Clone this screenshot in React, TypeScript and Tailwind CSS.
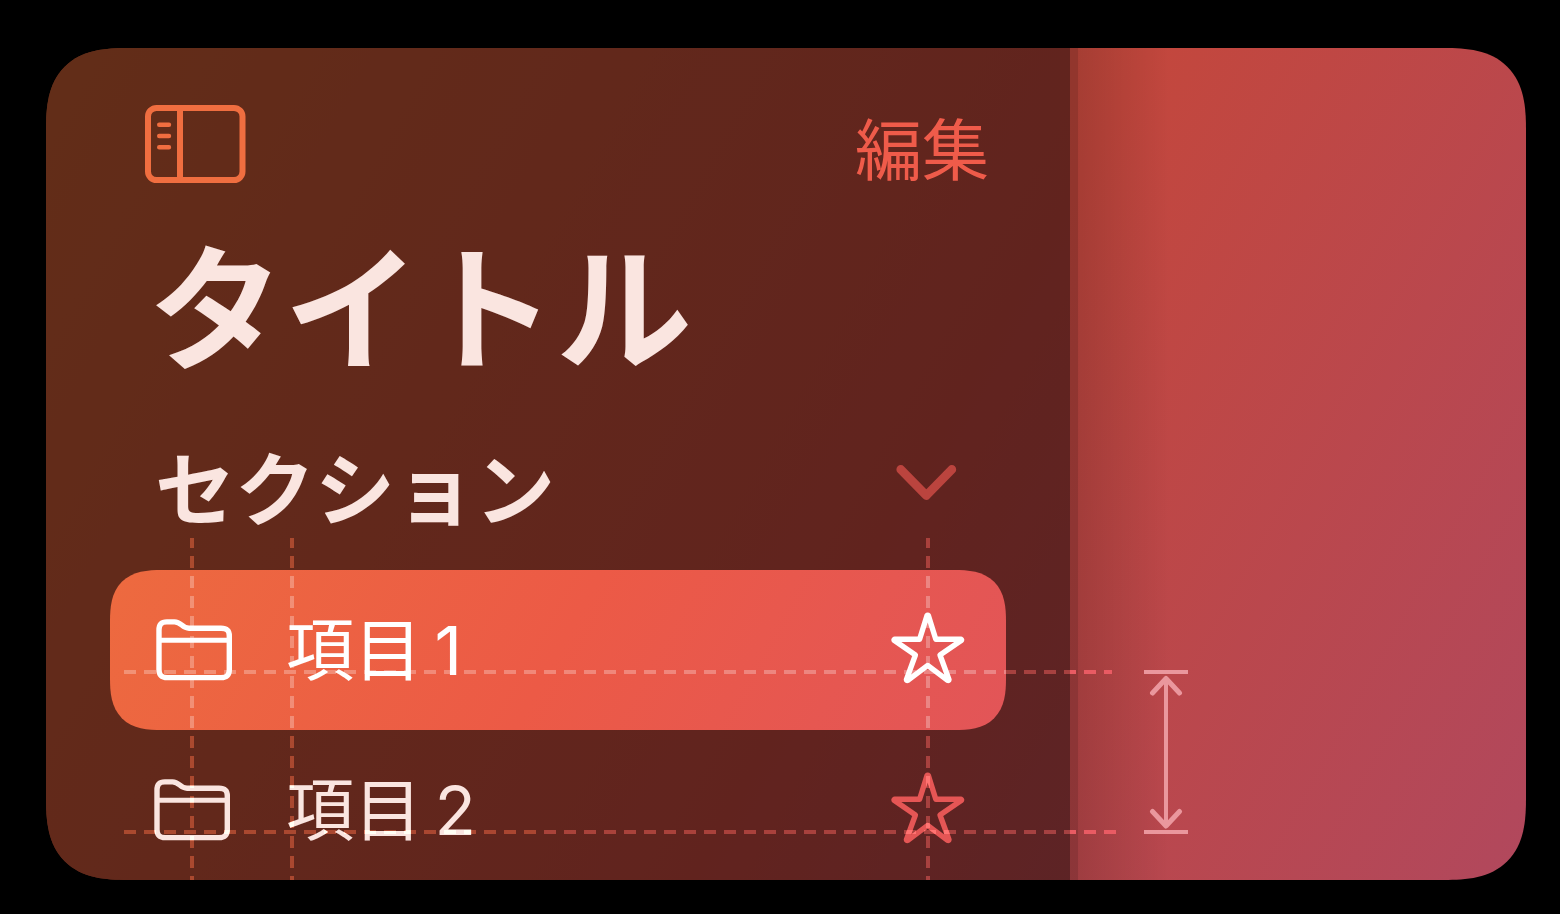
import React from "react";

const ink = "text-[#fae5e0]";

function SidebarIcon() {
  return (
    <svg width="102" height="78" viewBox="0 0 102 78" fill="none" stroke="currentColor" aria-hidden="true">
      <rect x="3" y="3" width="94.500" height="72" rx="8.500" strokeWidth="6" />
      <path d="M35 3V75" strokeWidth="6" />
      <path d="M14.2 19.8H24M14.2 31H24M14.2 42.2H24" strokeWidth="4.4" strokeLinecap="round" />
    </svg>
  );
}

function ChevronIcon() {
  return (
    <svg width="62" height="38" viewBox="0 0 62 38" fill="none" stroke="currentColor" strokeWidth="8.800" strokeLinecap="round" strokeLinejoin="round" aria-hidden="true">
      <path d="M5.8 5.500L31.300 31.500L56.8 5.500" />
    </svg>
  );
}

function FolderIcon() {
  return (
    <svg width="76" height="62" viewBox="0 0 76 62" fill="none" stroke="currentColor" strokeWidth="5.4" aria-hidden="true">
      <path d="M3 11C3 5.3 5.300 2.9 10.8 2.9H18.5C25.5 2.9 26 9.2 33 9.2H65C71 9.2 73.300 11.5 73.300 17V50.500C73.300 56 71 58.600 65 58.600H11.300C5.300 58.600 3 56 3 50.500Z" />
      <path d="M3 21.3H73" strokeWidth="5" />
    </svg>
  );
}

function StarIcon() {
  return (
    <svg width="74" height="76" viewBox="0 0 74 76" fill="none" stroke="currentColor" strokeWidth="5.4" strokeLinejoin="round" aria-hidden="true">
      <path d="M36 3.6Q36.700 2.8 37.400 3.6L44.8 27.2L70 27.2Q71.2 27.8 70.2 28.6L49 43L58 67.600Q57.8 69 56.6 68.400L36.700 53.4L16.8 68.400Q15.6 69 15.4 67.600L24.4 43L3.4 28.6Q2.4 27.8 3.6 27.2L28.6 27.2Z" />
    </svg>
  );
}

type RowProps = { label: string; count: number; selected?: boolean };

function Row({ label, count, selected = false }: RowProps) {
  return (
    <li
      className={
        selected
          ? "flex h-40 items-center justify-between rounded-[42px] bg-[linear-gradient(119deg,#ed6a3f_0%,#ec5a46_50%,#e25558_100%)] pr-[41px] pl-11 text-white supports-[corner-shape:squircle]:rounded-[52px] supports-[corner-shape:squircle]:[corner-shape:superellipse(1.42)]"
          : "flex h-40 items-center justify-between pr-[41px] pl-11 text-[#fae5e0]"
      }
    >
      <button type="button" className="flex items-center gap-[52px]">
        <span className={selected ? "flex w-20 justify-center" : "flex w-20 justify-start"}>
          <FolderIcon />
        </span>
        <span className="text-[68px] leading-20 whitespace-pre">
          {label}
          <span className="text-[44px] leading-none"> </span>
          {count}
        </span>
      </button>
      <button type="button" aria-label="お気に入り" className={selected ? "text-white" : "text-[#e55655]"}>
        <StarIcon />
      </button>
    </li>
  );
}

function Guides() {
  return (
    <svg className="pointer-events-none absolute top-0 left-0" width="1200" height="832" viewBox="0 0 1200 832" fill="none" aria-hidden="true">
      <g stroke="#482114" strokeWidth="4" strokeDasharray="12 8" className="mix-blend-plus-lighter">
        <path d="M146 490V522" strokeDashoffset="2" />
        <path d="M246 490V522" strokeDashoffset="2" />
        <path d="M146 682V832" strokeDashoffset="14" />
        <path d="M246 682V832" strokeDashoffset="14" />
        <path d="M78 784H498" />
      </g>
      <g stroke="#481e1d" strokeWidth="4" strokeDasharray="12 8" className="mix-blend-plus-lighter">
        <path d="M882 490V522" strokeDashoffset="2" />
        <path d="M882 682V832" strokeDashoffset="14" />
        <path d="M960 624H1024" strokeDashoffset="2" />
        <path d="M498 784H1024" />
      </g>
      <g stroke="#fff" strokeOpacity="0.28" strokeWidth="4" strokeDasharray="12 8">
        <path d="M146 522V682" strokeDashoffset="14" />
        <path d="M246 522V682" strokeDashoffset="14" />
        <path d="M882 522V682" strokeDashoffset="14" />
        <path d="M78 624H960" />
      </g>
      <g stroke="#e95b63" strokeWidth="4" strokeDasharray="12 8">
        <path d="M1024 624H1066" strokeDashoffset="6" />
        <path d="M1024 784H1070" strokeDashoffset="6" />
      </g>
      <g stroke="#ea979d" strokeWidth="4">
        <path d="M1098 624H1142M1098 784H1142M1120 632V777" />
        <path d="M1106.500 645L1120 630.500L1133.500 645M1106.500 763.500L1120 778L1133.500 763.500" strokeWidth="5" strokeLinecap="round" strokeLinejoin="round" />
      </g>
    </svg>
  );
}

export default function App() {
  return (
    <div className="flex h-screen bg-black pt-12 pr-[34px] pb-[34px] pl-[46px] font-['Inter','Noto_Sans_CJK_JP',sans-serif]" lang="ja">
      <div className="relative isolate flex flex-1 overflow-hidden rounded-[66px] bg-[linear-gradient(119deg,#c55b30_0%,#c3473d_57%,#b1485d_100%)] supports-[corner-shape:squircle]:rounded-[82px] supports-[corner-shape:squircle]:[corner-shape:superellipse(1.42)]">
        <aside className="w-[1024px] shrink-0 bg-black/50">
          <header className="flex items-start justify-between pt-[57px] pr-[81px] pl-[99px]">
            <button type="button" aria-label="サイドバー" className="text-[#f06e40]">
              <SidebarIcon />
            </button>
            <button type="button" className="text-[67px] leading-[92px] text-[#ef5b4a]">編集</button>
          </header>
          <h1 className={`pt-3.5 pl-[102px] text-[136px] leading-[200px] font-bold ${ink}`}>タイトル</h1>
          <div className="flex h-[159px] items-center justify-between pr-[113px] pb-4 pl-[109px]">
            <h2 className={`pt-3.5 text-[80px] leading-[120px] font-bold ${ink}`}>セクション</h2>
            <button type="button" aria-label="折りたたむ" className="text-[#bb443e]">
              <ChevronIcon />
            </button>
          </div>
          <ul className="pr-16 pl-16">
            <Row label="項目" count={1} selected />
            <Row label="項目" count={2} />
          </ul>
        </aside>
        <main className="flex flex-1">
          <div className="w-2 bg-black/25" />
          <div className="w-[92px] bg-linear-to-r from-black/15 to-transparent" />
        </main>
        <Guides />
      </div>
    </div>
  );
}
